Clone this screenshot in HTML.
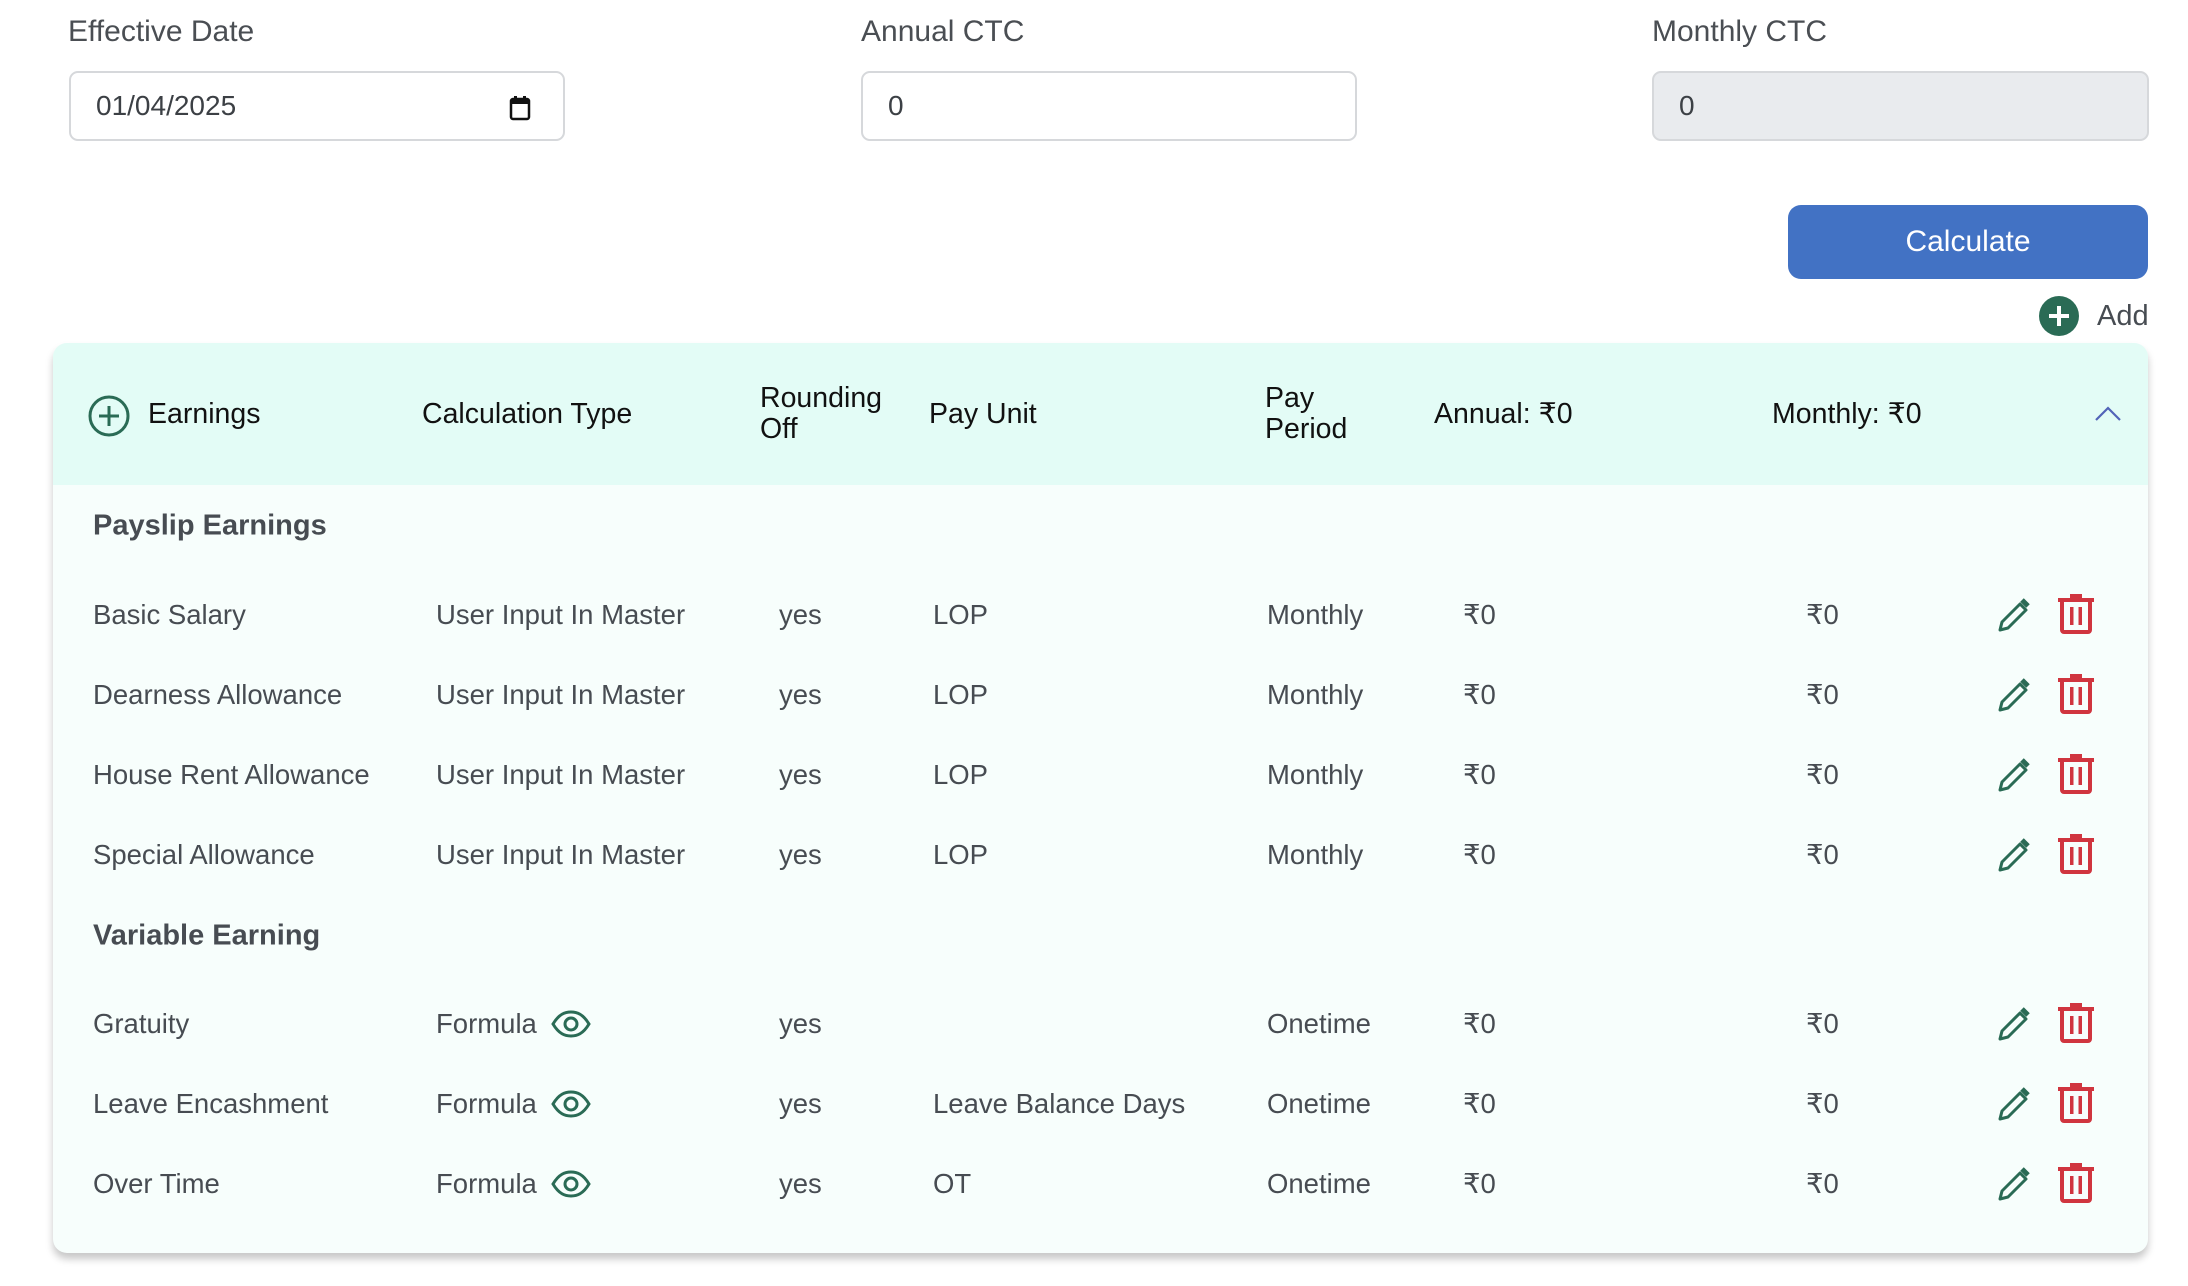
<!DOCTYPE html>
<html><head><meta charset="utf-8">
<style>
*{margin:0;padding:0;box-sizing:border-box}
body{width:2188px;height:1286px;background:#fff;font-family:"Liberation Sans",sans-serif;position:relative;overflow:hidden;color:#474c52}
.a{position:absolute;white-space:nowrap}
.lbl{font-size:30px;color:#4a4e53;top:15px}
.inp{position:absolute;top:71px;height:70px;border:2px solid #d6d8db;border-radius:9px;font-size:28px;color:#3c4045;padding-left:25px;line-height:66px}
.hd{font-size:28.5px;color:#111;line-height:31px}
.r{font-size:27.5px;color:#474c52;transform:translateY(-50%)}
.sec{font-size:29px;font-weight:bold;color:#474c52;transform:translateY(-50%)}
</style></head><body>
<div class="a lbl" style="left:68px">Effective Date</div>
<div class="a lbl" style="left:861px">Annual CTC</div>
<div class="a lbl" style="left:1652px">Monthly CTC</div>
<div class="inp" style="left:69px;width:496px">01/04/2025
<svg style="position:absolute;left:437px;top:22px" width="24" height="26" viewBox="0 0 24 26"><rect x="3" y="4" width="18" height="20" rx="2" fill="none" stroke="#111" stroke-width="2.5"/><rect x="3" y="4" width="18" height="5" fill="#111"/><rect x="6" y="1" width="3" height="4" fill="#111"/><rect x="15" y="1" width="3" height="4" fill="#111"/></svg></div>
<div class="inp" style="left:861px;width:496px">0</div>
<div class="inp" style="left:1652px;width:497px;background:#e9ebee">0</div>
<div class="a" style="left:1788px;top:205px;width:360px;height:74px;background:#4272c4;border-radius:13px;color:#fff;font-size:30px;text-align:center;line-height:74px">Calculate</div>
<svg class="a" style="left:2039px;top:296px" width="40" height="40" viewBox="0 0 40 40"><circle cx="20" cy="20" r="20" fill="#2a6b55"/><path d="M20 10v20M10 20h20" stroke="#fff" stroke-width="4"/></svg>
<div class="a" style="left:2097px;top:300px;font-size:29px;color:#474c52">Add</div>

<div class="a" style="left:53px;top:343px;width:2095px;height:910px;background:#f7fefc;border-radius:14px;box-shadow:0 6px 8px rgba(0,0,0,0.22)"></div>
<div class="a" style="left:53px;top:343px;width:2095px;height:142px;background:#e3fcf6;border-radius:14px 14px 0 0"></div>

<svg class="a" style="left:88px;top:395px" width="42" height="42" viewBox="0 0 42 42"><circle cx="21" cy="21" r="19" fill="none" stroke="#2a6b55" stroke-width="3"/><path d="M21 11v20M11 21h20" stroke="#2a6b55" stroke-width="3"/></svg>
<div class="a hd" style="left:148px;top:399px">Earnings</div>
<div class="a hd" style="left:422px;top:399px">Calculation Type</div>
<div class="a hd" style="left:760px;top:383px">Rounding<br>Off</div>
<div class="a hd" style="left:929px;top:399px">Pay Unit</div>
<div class="a hd" style="left:1265px;top:383px">Pay<br>Period</div>
<div class="a hd" style="left:1434px;top:399px">Annual: ₹0</div>
<div class="a hd" style="left:1772px;top:399px">Monthly: ₹0</div>
<svg class="a" style="left:2094px;top:405px" width="28" height="18" viewBox="0 0 28 18"><path d="M2 15L14 3L26 15" fill="none" stroke="#5264b8" stroke-width="2.2"/></svg>

<div class="a sec" style="left:93px;top:526px">Payslip Earnings</div>
<div class="a sec" style="left:93px;top:936px">Variable Earning</div>

<div id="rows"></div>
<script>
var rows=[
[615,"Basic Salary","User Input In Master",0,"LOP","Monthly"],
[695,"Dearness Allowance","User Input In Master",0,"LOP","Monthly"],
[775,"House Rent Allowance","User Input In Master",0,"LOP","Monthly"],
[855,"Special Allowance","User Input In Master",0,"LOP","Monthly"],
[1024,"Gratuity","Formula",1,"","Onetime"],
[1104,"Leave Encashment","Formula",1,"Leave Balance Days","Onetime"],
[1184,"Over Time","Formula",1,"OT","Onetime"]];
var h="";
rows.forEach(function(r){var y=r[0];
function t(x,s){h+='<div class="a r" style="left:'+x+'px;top:'+y+'px">'+s+'</div>';}
t(93,r[1]);t(436,r[2]);t(779,"yes");t(933,r[4]);t(1267,r[5]);t(1463,"₹0");t(1806,"₹0");
if(r[3])h+='<svg class="a" style="left:551px;top:'+(y-14)+'px" width="40" height="28" viewBox="0 0 40 28"><path d="M2 14C8 4 14 2 20 2S32 4 38 14C32 24 26 26 20 26S8 24 2 14Z" fill="none" stroke="#2a6b55" stroke-width="3"/><circle cx="20" cy="14" r="6" fill="none" stroke="#2a6b55" stroke-width="3"/></svg>';
h+='<svg class="a" style="left:1996px;top:'+(y-18)+'px" width="34" height="36" viewBox="0 0 34 36"><path d="M4 33l2-8L24 7l6 6L12 31Z" fill="none" stroke="#2a6b55" stroke-width="3" stroke-linejoin="round"/><path d="M26 3l6 6" stroke="#2a6b55" stroke-width="5"/></svg>';
h+='<svg class="a" style="left:2058px;top:'+(y-21)+'px" width="36" height="40" viewBox="0 0 36 40"><rect x="0" y="4" width="36" height="4" fill="#d0353f"/><rect x="12" y="0" width="12" height="5" fill="#d0353f"/><path d="M4 8v28a2 2 0 0 0 2 2h24a2 2 0 0 0 2-2V8" fill="none" stroke="#d0353f" stroke-width="4"/><rect x="12" y="13" width="3.5" height="18" fill="#d0353f"/><rect x="20.5" y="13" width="3.5" height="18" fill="#d0353f"/></svg>';
});
document.getElementById("rows").innerHTML=h;
</script>
</body></html>
